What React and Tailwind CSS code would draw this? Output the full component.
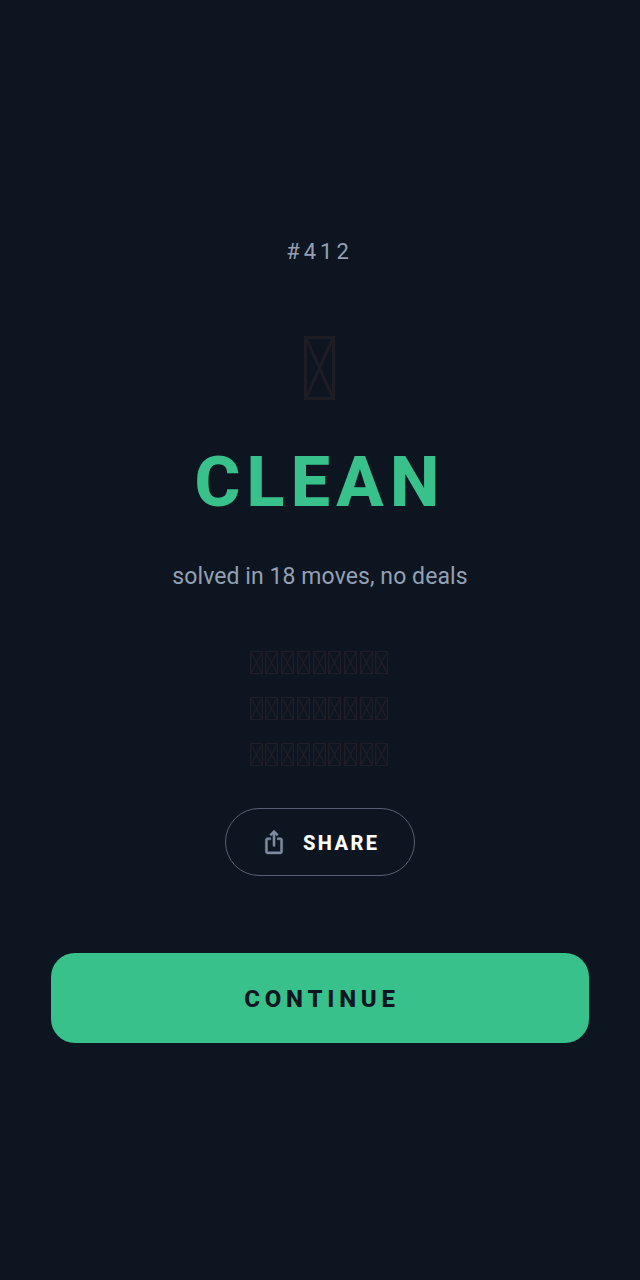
const Tofu = ({ className, stroke, width }) => (
  <svg viewBox="0 0 31 64" preserveAspectRatio="none" className={className} fill="none">
    <rect x="1.5" y="1.5" width="28" height="61" stroke={stroke} strokeWidth={width} />
    <path d="M2 2 L29 62 M29 2 L2 62" stroke={stroke} strokeWidth={width} />
  </svg>
);

const ShareIcon = () => (
  <svg width="26" height="26" viewBox="0 0 24 24" fill="#7f8ba0" stroke="#7f8ba0" strokeWidth="0.4">
    <path d="M16 5l-1.42 1.42-1.59-1.59V16h-1.98V4.83L9.42 6.42 8 5l4-4 4 4zm4 5v11c0 1.1-.9 2-2 2H6c-1.11 0-2-.9-2-2V10c0-1.11.89-2 2-2h3v2H6v11h12V10h-3V8h3c1.1 0 2 .89 2 2z" />
  </svg>
);

const rows = [0, 1, 2];
const cells = [0, 1, 2, 3, 4, 5, 6, 7, 8];

export default function App() {
  return (
    <div className="h-[1280px] w-[640px] bg-[#0d1520] flex flex-col items-center font-['Roboto',sans-serif]">
      <p className="mt-[238px] h-7 leading-7 text-[22px] tracking-[0.18em] text-[#94a0b4] mr-[1px]">#412</p>

      <div className="mt-[70px] mr-[1px]">
        <Tofu className="w-[31px] h-16" stroke="#1f1d24" width="3" />
      </div>

      <h1 className="mt-[44px] h-[76px] leading-[76px] text-[70px] font-extrabold tracking-[0.09em] text-[#38c18b]">CLEAN</h1>

      <p className="mt-[43px] h-7 leading-7 text-[23px] tracking-[0.08px] text-[#94a0b4]">solved in 18 moves, no deals</p>

      <div className="mt-[60px] mr-[2px] flex flex-col gap-[23px]">
        {rows.map((r) => (
          <div key={r} className="flex gap-[2.7px]">
            {cells.map((c) => (
              <Tofu key={c} className="w-[13px] h-[23px]" stroke="#1f1d25" width="3.5" />
            ))}
          </div>
        ))}
      </div>

      <button className="mt-[42px] w-[190px] h-[68px] rounded-full border border-[#566070] flex items-center pl-[35px] gap-[16px]">
        <ShareIcon />
        <span className="pt-[2px] text-[20px] font-extrabold tracking-[0.12em] text-white">SHARE</span>
      </button>

      <button className="mt-[77px] w-[538px] h-[90px] rounded-[24px] bg-[#38c18b] flex items-center justify-center pl-[4px]">
        <span className="pt-[2px] text-[24px] font-extrabold tracking-[0.2em] text-[#0d1520]">CONTINUE</span>
      </button>
    </div>
  );
}
